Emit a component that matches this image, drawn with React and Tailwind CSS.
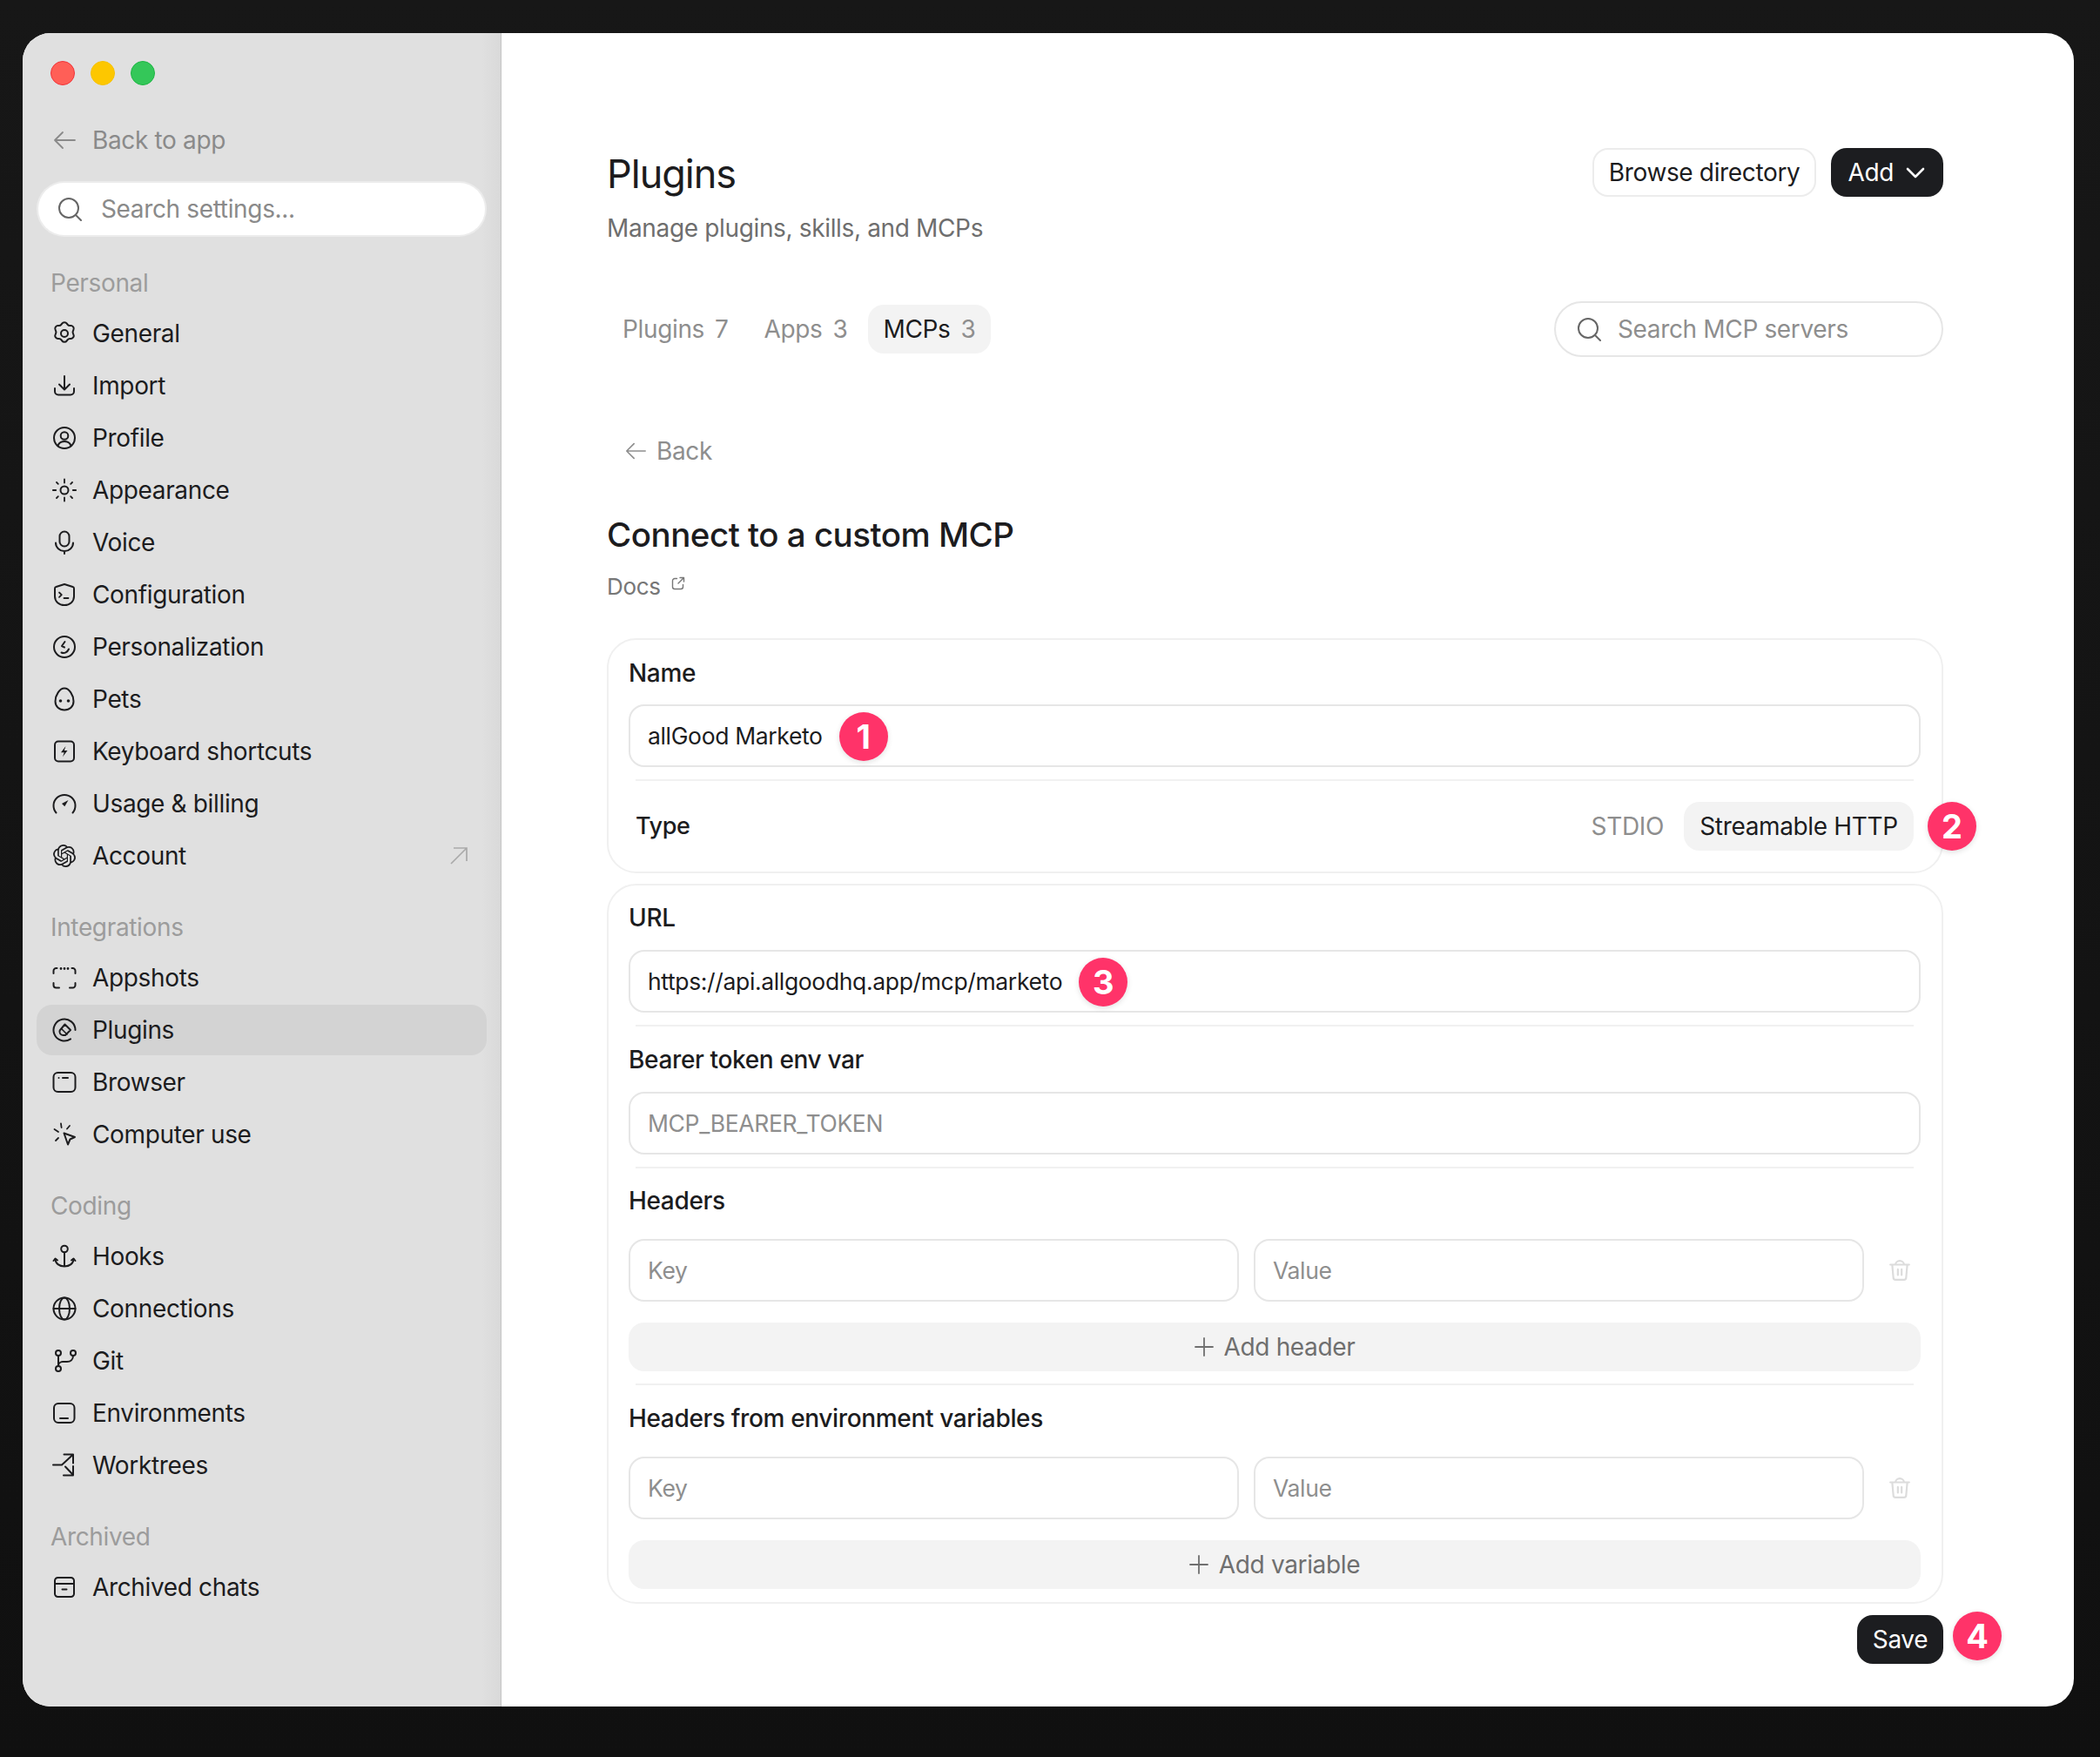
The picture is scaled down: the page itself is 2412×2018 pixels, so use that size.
import { SiOpenai } from "react-icons/si";

const Svg = ({ children, className = "w-7 h-7" }) => (
  <svg
    viewBox="0 0 28 28"
    fill="none"
    stroke="currentColor"
    strokeWidth="2"
    strokeLinecap="round"
    strokeLinejoin="round"
    className={`shrink-0 ${className}`}
  >
    {children}
  </svg>
);

const icons = {
  General: (
    <Svg>
      <path d="M11.2 2.6a3.4 3.4 0 0 1 5.6 0l.7 1a3.4 3.4 0 0 0 2.9 1.5l1.2-.1a3.4 3.4 0 0 1 2.8 4.9l-.5 1.100a3.4 3.4 0 0 0 0 3l.5 1.100a3.4 3.4 0 0 1-2.8 4.900l-1.200-.1a3.4 3.4 0 0 0-2.900 1.500l-.7 1a3.4 3.4 0 0 1-5.600 0l-.7-1a3.4 3.4 0 0 0-2.900-1.500l-1.200.1a3.4 3.4 0 0 1-2.800-4.900l.5-1.100a3.4 3.4 0 0 0 0-3l-.5-1.100a3.4 3.4 0 0 1 2.800-4.900l1.200.1a3.4 3.4 0 0 0 2.900-1.500z" />
      <circle cx="14" cy="14" r="4" />
    </Svg>
  ),
  Import: (
    <Svg>
      <path d="M14 3v15M8 12.5l6 6 6-6" />
      <path d="M3 17v3.5a4 4 0 0 0 4 4h14a4 4 0 0 0 4-4V17" />
    </Svg>
  ),
  Profile: (
    <Svg>
      <circle cx="14" cy="14" r="12" />
      <circle cx="14" cy="11.5" r="4.3" />
      <path d="M6.5 23c1.2-3.6 4.2-5 7.5-5s6.3 1.4 7.5 5" />
    </Svg>
  ),
  Appearance: (
    <Svg>
      <circle cx="14" cy="14" r="4.5" />
      <path d="M14 1.5v4M14 22.5v4M.8 14h3.400M23.800 14h3.400M5 5l1.800 1.800M21.200 21.200L23 23M5 23l1.800-1.800M21.200 6.800L23 5" strokeWidth="1.800" />
    </Svg>
  ),
  Voice: (
    <Svg>
      <rect x="8.5" y="1.5" width="11" height="17" rx="5.5" />
      <path d="M4 14.5a10 9.5 0 0 0 20 0M14 24v3" />
    </Svg>
  ),
  Configuration: (
    <Svg>
      <path d="M14 2l9.5 3a2 2 0 0 1 1.5 2V16c0 5.800-4.700 10-11 10S3 21.800 3 16V7a2 2 0 0 1 1.500-2z" />
      <path d="M8 11.500l2.800 2.700L8 16.800M13.500 18h5" strokeWidth="1.800" />
    </Svg>
  ),
  Personalization: (
    <Svg>
      <circle cx="14" cy="14" r="12" />
      <path d="M14.5 8l-3.500 5 3 1.500M10.500 20.500c3.500 1.500 7-.5 8.500-4" />
    </Svg>
  ),
  Pets: (
    <Svg>
      <path d="M14 1.500c5.500 0 10.500 8 10.500 15 0 6-4.500 10-10.500 10s-10.500-4-10.500-10c0-7 5-15 10.500-15z" />
      <circle cx="9.500" cy="16" r="1.800" fill="currentColor" stroke="none" />
      <circle cx="18.500" cy="16" r="1.800" fill="currentColor" stroke="none" />
    </Svg>
  ),
  "Keyboard shortcuts": (
    <Svg>
      <rect x="3" y="2.500" width="22" height="23" rx="4" />
      <path d="M15.500 8l-5.500 7.200h3.700l-1.700 5 5.500-7.200h-3.700z" fill="currentColor" stroke="none" />
    </Svg>
  ),
  "Usage & billing": (
    <Svg>
      <path d="M4.500 24.500a12.500 12.500 0 1 1 19 0" />
      <path d="M11 14l7.500-4-4.200 7.200z" fill="currentColor" stroke="none" />
    </Svg>
  ),
  Account: <SiOpenai className="w-[26px] h-[26px] mx-px shrink-0" />,
  Appshots: (
    <Svg>
      <path d="M1.500 9V6a3 3 0 0 1 3-3h1M22.500 3h1a3 3 0 0 1 3 3v3M1.500 20v2.500a3 3 0 0 0 3 3h3.500M26.500 20v2.500a3 3 0 0 1-3 3H20" />
      <path d="M10 3.500h.01M14 3.500h.01M18 3.500h.01" strokeWidth="2.800" />
    </Svg>
  ),
  Plugins: (
    <Svg>
      <path d="M26.500 14a12.500 12.500 0 1 0-5.500 10.400" />
      <path d="M14.500 7.500l6.500 6.500-6 6h-2.500a4 4 0 0 1-3.800-5.500z" />
      <path d="M10.500 12.500l6.500 6.500" strokeWidth="1.600" />
    </Svg>
  ),
  Browser: (
    <Svg>
      <rect x="1.500" y="3" width="25" height="22" rx="5" />
      <path d="M7.500 9h.01M12 9h6" />
    </Svg>
  ),
  "Computer use": (
    <Svg>
      <path d="M13.500 12.500l12.500 4.500-5.500 2.500-2.500 6z" />
      <path d="M10 1.500l.6 4.500M20 4l-3 3.500M2.500 8l4.500 3M4 21l3-3" strokeWidth="1.800" />
    </Svg>
  ),
  Hooks: (
    <Svg>
      <circle cx="14" cy="5.500" r="3.800" />
      <path d="M14 9.500v16M3.500 17c0 5 4.500 8.500 10.500 8.500s10.500-3.500 10.500-8.500" />
      <path d="M1.500 19l2-2.500 2.500 2M26.500 19l-2-2.500-2.500 2" />
    </Svg>
  ),
  Connections: (
    <Svg>
      <circle cx="14" cy="14" r="12.500" />
      <ellipse cx="14" cy="14" rx="6" ry="12.500" />
      <path d="M1.500 14h25" />
    </Svg>
  ),
  Git: (
    <Svg>
      <circle cx="7" cy="5" r="3" />
      <circle cx="7" cy="23" r="3" />
      <circle cx="24" cy="5" r="3" />
      <path d="M7 8v12M24 8c0 4.500-3 7-7 7h-5a5 5 0 0 0-5 5" />
    </Svg>
  ),
  Environments: (
    <Svg>
      <rect x="2" y="3" width="23.500" height="22" rx="5" />
      <path d="M9 20h9" />
    </Svg>
  ),
  Worktrees: (
    <Svg>
      <path d="M1 13.500h10L23.500 2M13.500 1.500H24v10" />
      <path d="M15 15.500l9 9.500M24 15v10.500H13" />
    </Svg>
  ),
  "Archived chats": (
    <Svg>
      <path d="M3 6.500A3.500 3.500 0 0 1 6.500 3h15A3.500 3.500 0 0 1 25 6.500V10H3z" />
      <path d="M3 10v11.500A3.500 3.500 0 0 0 6.500 25h15a3.500 3.500 0 0 0 3.500-3.500V10M11.500 16.500h5" />
    </Svg>
  ),
};

const sections = [
  {
    title: "Personal",
    items: ["General", "Import", "Profile", "Appearance", "Voice", "Configuration", "Personalization", "Pets", "Keyboard shortcuts", "Usage & billing", "Account"],
  },
  { title: "Integrations", items: ["Appshots", "Plugins", "Browser", "Computer use"] },
  { title: "Coding", items: ["Hooks", "Connections", "Git", "Environments", "Worktrees"] },
  { title: "Archived", items: ["Archived chats"] },
];

const BackArrow = ({ className }) => (
  <svg viewBox="0 0 28 28" fill="none" stroke="currentColor" strokeWidth="1.800" strokeLinecap="round" strokeLinejoin="round" className={className}>
    <path d="M3 14h23M12 5l-9 9 9 9" />
  </svg>
);

const SearchIcon = () => (
  <svg viewBox="0 0 28 28" fill="none" stroke="currentColor" strokeWidth="2" strokeLinecap="round" className="w-7 h-7 shrink-0 text-[#666]">
    <circle cx="13" cy="13" r="11" />
    <path d="M21 21l6 6" />
  </svg>
);

const Badge = ({ n, className = "" }) => (
  <span className={`flex items-center justify-center shrink-0 w-[56px] h-[56px] rounded-full bg-[#ff3369] text-white text-[38px] font-bold tracking-normal shadow-[0_2px_6px_rgba(0,0,0,0.12)] ${className}`}>
    {n}
  </span>
);

const Field = ({ children, muted }) => (
  <div className={`flex items-center gap-[19px] h-[72px] pt-[2px] px-[20px] flex-1 min-w-0 border-2 border-[#e6e6e6] rounded-[18px] text-[26.5px] ${muted ? "text-[#8e8e8e]" : "text-[#1c1c1e]"}`}>
    {children}
  </div>
);

const Label = ({ children, className = "" }) => (
  <div className={`h-9 flex items-center font-medium text-[#1c1c1e] ${className}`}>{children}</div>
);

const Divider = ({ className = "" }) => <div className={`h-[2px] mx-2 bg-[#f1f1f1] ${className}`} />;

const Trash = () => (
  <div className="w-[48px] flex items-center justify-center text-[#dcdcdc]">
    <svg viewBox="0 0 24 24" fill="none" stroke="currentColor" strokeWidth="2" strokeLinecap="round" strokeLinejoin="round" className="w-[26px] h-[26px]">
      <path d="M2 6h20M7.5 6a4.5 4 0 0 1 9 0M4 6l1.200 13.500a2.500 2.500 0 0 0 2.500 2.500h8.600a2.500 2.500 0 0 0 2.500-2.500L20 6M10 11v6M14 11v6" />
    </svg>
  </div>
);

const KeyValue = ({ className = "" }) => (
  <div className={`flex gap-[17px] ${className}`}>
    <Field muted>Key</Field>
    <Field muted>Value</Field>
    <Trash />
  </div>
);

const AddButton = ({ label, className = "" }) => (
  <div className={`flex items-center justify-center gap-[12px] h-[56px] rounded-[18px] bg-[#f3f3f3] text-[#6f6f6f] ${className}`}>
    <svg viewBox="0 0 22 22" fill="none" stroke="currentColor" strokeWidth="1.800" strokeLinecap="round" className="w-[22px] h-[22px]">
      <path d="M11 1v20M1 11h20" />
    </svg>
    {label}
  </div>
);

const Sidebar = () => (
  <aside className="w-[550px] shrink-0 pt-8 px-4 border-r border-[#c4c4c4] bg-[linear-gradient(to_right,#e0e0e0_96%,#d9d9d9_100%)]">
    <div className="flex gap-[18px] pl-[16px]">
      <span className="w-7 h-7 rounded-full bg-[#ff5f57] border border-[#f0343a]" />
      <span className="w-7 h-7 rounded-full bg-[#fdc700] border border-[#f5c000]" />
      <span className="w-7 h-7 rounded-full bg-[#34c759] border border-[#1fb545]" />
    </div>
    <div className="flex items-center gap-[18px] h-10 mt-[43px] pl-[18px] text-[#8a8a8a]">
      <BackArrow className="w-7 h-7 shrink-0" />
      Back to app
    </div>
    <div className="flex items-center gap-[22px] h-[60px] mt-[29px] mx-[2px] pl-[22px] rounded-full bg-white shadow-[0_0_0_2px_#ececec] text-[#8a8a8a]">
      <SearchIcon />
      Search settings...
    </div>
    {sections.map((s, i) => (
      <div key={s.title} className={i === 0 ? "mt-[37px]" : "mt-[35px]"}>
        <div className="h-9 flex items-center pl-[16px] text-[#9c9c9c]">{s.title}</div>
        <div className="flex flex-col gap-[2px] mt-[11px]">
          {s.items.map((item) => (
            <div
              key={item}
              className={`flex items-center gap-[18px] h-[58px] pl-[18px] pr-[22px] rounded-[18px] text-[#1c1c1e] ${item === "Plugins" ? "bg-[#d3d3d3]" : ""}`}
            >
              {icons[item]}
              <span className="flex-1">{item}</span>
              {item === "Account" && (
                <svg viewBox="0 0 20 20" fill="none" stroke="#a9a9a9" strokeWidth="1.700" className="w-5 h-5">
                  <path d="M1 19L19 1M4 1h15v15" />
                </svg>
              )}
            </div>
          ))}
        </div>
      </div>
    ))}
  </aside>
);

export default function App() {
  return (
    <div className="w-[2412px] h-[2018px] pt-[38px] pl-[26px] bg-[linear-gradient(180deg,#171717,#101010)] font-['Inter',sans-serif] text-[28px] tracking-[-0.35px] antialiased">
      <div className="flex w-[2356px] h-[1922px] rounded-[32px] overflow-hidden bg-white">
        <Sidebar />
        <main className="flex-1 pt-[132px] pl-[121px] pr-[150px]">
          <div className="flex justify-between items-start">
            <div>
              <h1 className="text-[45px] leading-[60px] tracking-[-1px] text-[#1c1c1e]">Plugins</h1>
              <p className="mt-[12px] h-10 flex items-center text-[#6e6e6e]">Manage plugins, skills, and MCPs</p>
            </div>
            <div className="flex gap-[17px]">
              <button className="h-[56px] px-[17px] rounded-[18px] border-2 border-[#ececec] text-[#1c1c1e]">Browse directory</button>
              <button className="flex items-center gap-[14px] h-[56px] pl-[19px] pr-[21px] rounded-[18px] bg-[#1c1d20] text-white">
                Add
                <svg viewBox="0 0 22 14" fill="none" stroke="currentColor" strokeWidth="2.600" strokeLinecap="round" strokeLinejoin="round" className="w-[22px] h-[14px]">
                  <path d="M2 3l9 9 9-9" />
                </svg>
              </button>
            </div>
          </div>

          <div className="flex justify-between items-center h-[64px] mt-[64px]">
            <div className="flex gap-[5px]">
              {[
                ["Plugins", "7", false],
                ["Apps", "3", false],
                ["MCPs", "3", true],
              ].map(([name, count, active]) => (
                <div
                  key={name}
                  className={`flex items-center gap-[12px] h-[56px] px-[18px] rounded-[18px] text-[#8e8e8e] ${active ? "bg-[#f3f3f3]" : ""}`}
                >
                  <span className={active ? "text-[#1c1c1e]" : ""}>{name}</span>
                  <span>{count}</span>
                </div>
              ))}
            </div>
            <div className="flex items-center gap-[19px] w-[447px] h-[64px] pl-[24px] rounded-full border-2 border-[#e6e6e6] text-[#8e8e8e]">
              <SearchIcon />
              Search MCP servers
            </div>
          </div>

          <div className="flex items-center gap-[11px] h-10 mt-[88px] pl-[20px] text-[#8e8e8e]">
            <BackArrow className="w-[26px] h-[26px] shrink-0" />
            Back
          </div>
          <h2 className="h-14 flex items-center mt-[49px] text-[38.5px] tracking-[-0.5px] font-medium text-[#1c1c1e]">Connect to a custom MCP</h2>
          <div className="flex items-center gap-[12px] h-9 mt-3 text-[26px] text-[#777]">
            Docs
            <svg viewBox="0 0 16 16" fill="none" stroke="currentColor" strokeWidth="1.400" strokeLinecap="round" strokeLinejoin="round" className="w-4 h-4 -mt-[6px]">
              <path d="M6.5 2.5H4A2.5 2.5 0 0 0 1.5 5v7A2.5 2.5 0 0 0 4 14.5h7a2.5 2.5 0 0 0 2.5-2.5V9.5M8 8l6.5-6.500M10 1.500h4.500V6" />
            </svg>
          </div>

          <section className="mt-[42px] pt-[20px] pb-[24px] pl-[23px] pr-[24px] rounded-[34px] border-2 border-[#f0f0f0]">
            <Label>Name</Label>
            <div className="flex mt-[18px]">
              <Field>
                allGood Marketo
                <Badge n="1" />
              </Field>
            </div>
            <Divider className="mt-[14px]" />
            <div className="flex items-center justify-between mt-[24px] mx-2">
              <span className="text-[27px] font-medium text-[#1c1c1e]">Type</span>
              <div className="flex items-center gap-[23px]">
                <span className="text-[#8e8e8e]">STDIO</span>
                <div className="relative flex items-center justify-center w-[264px] h-[56px] rounded-[18px] bg-[#f3f3f3] text-[#1c1c1e]">
                  Streamable HTTP
                  <Badge n="2" className="absolute left-full top-0 ml-[16px]" />
                </div>
              </div>
            </div>
          </section>

          <section className="mt-[12px] pt-[19px] pb-[15px] pl-[23px] pr-[24px] rounded-[34px] border-2 border-[#f0f0f0]">
            <Label>URL</Label>
            <div className="flex mt-[19px]">
              <Field>
                https://api.allgoodhq.app/mcp/marketo
                <Badge n="3" />
              </Field>
            </div>
            <Divider className="mt-[14px]" />
            <Label className="mt-[20px]">Bearer token env var</Label>
            <div className="flex mt-[19px]">
              <Field muted>MCP_BEARER_TOKEN</Field>
            </div>
            <Divider className="mt-[14px]" />
            <Label className="mt-[19px]">Headers</Label>
            <KeyValue className="mt-[26px]" />
            <AddButton label="Add header" className="mt-[24px]" />
            <Divider className="mt-[14px]" />
            <Label className="mt-[20px]">Headers from environment variables</Label>
            <KeyValue className="mt-[26px]" />
            <AddButton label="Add variable" className="mt-[24px]" />
          </section>

          <div className="flex justify-end mt-[13px]">
            <button className="relative h-[56px] w-[99px] rounded-[18px] bg-[#1c1d20] text-white">
              Save
              <Badge n="4" className="absolute left-full -top-1 ml-[11px]" />
            </button>
          </div>
        </main>
      </div>
    </div>
  );
}
